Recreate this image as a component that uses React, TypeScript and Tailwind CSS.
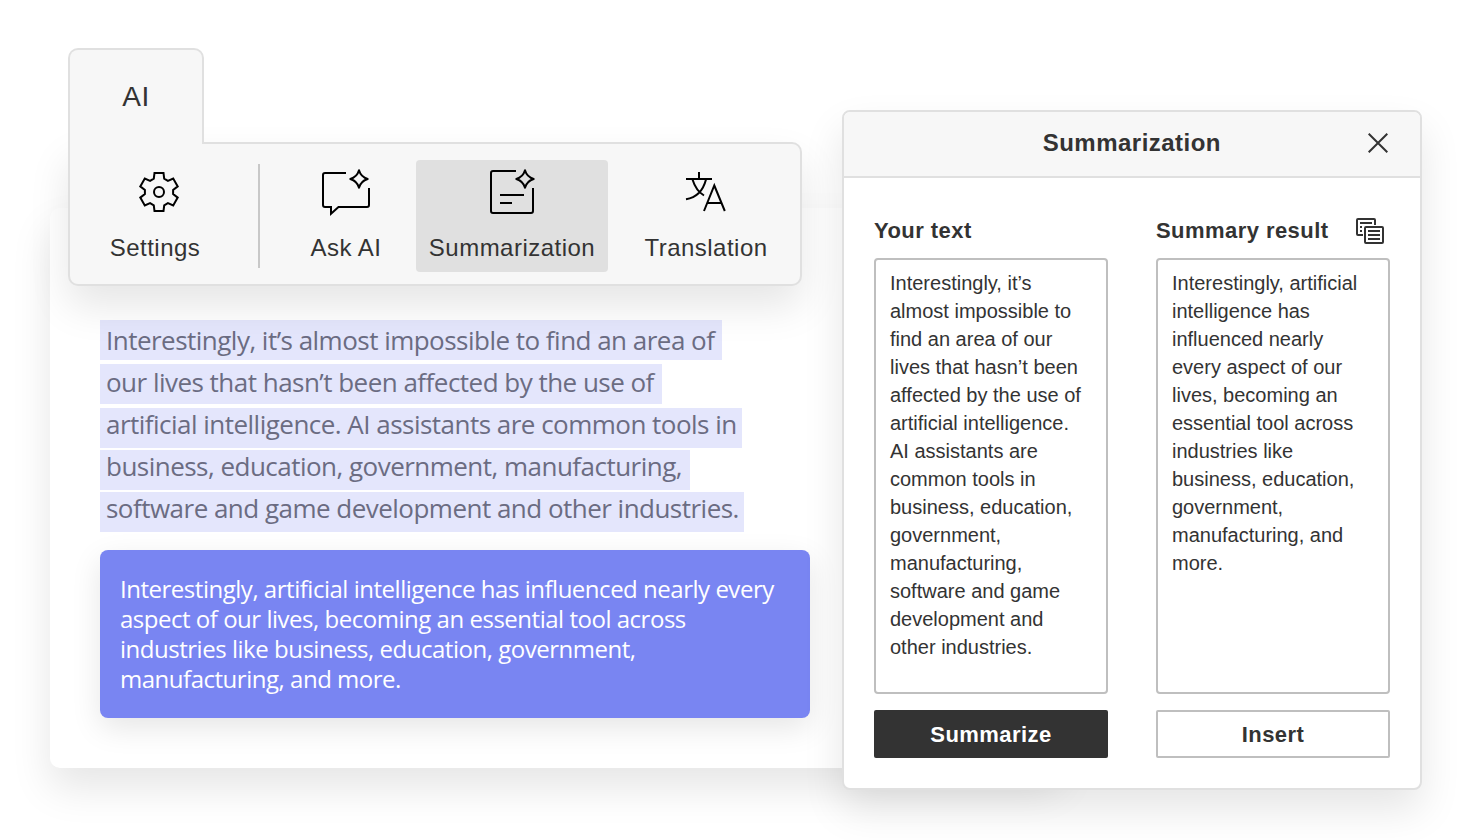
import type { ReactNode } from "react";

const selectedLines = [
  { text: "Interestingly, it’s almost impossible to find an area of", box: "w-[622px] leading-[40px]" },
  { text: "our lives that hasn’t been affected by the use of", box: "mt-1 w-[562px] leading-[36px]" },
  { text: "artificial intelligence. AI assistants are common tools in", box: "mt-1 w-[642px] leading-[32px]" },
  { text: "business, education, government, manufacturing,", box: "mt-0.5 w-[590px] leading-[32px]" },
  { text: "software and game development and other industries.", box: "mt-0.5 w-[644px] leading-[32px]" },
];

const summaryLines = [
  "Interestingly, artificial intelligence has influenced nearly every",
  "aspect of our lives, becoming an essential tool across",
  "industries like business, education, government,",
  "manufacturing, and more.",
];

const yourText = [
  "Interestingly, it’s",
  "almost impossible to",
  "find an area of our",
  "lives that hasn’t been",
  "affected by the use of",
  "artificial intelligence.",
  "AI assistants are",
  "common tools in",
  "business, education,",
  "government,",
  "manufacturing,",
  "software and game",
  "development and",
  "other industries.",
];

const resultText = [
  "Interestingly, artificial",
  "intelligence has",
  "influenced nearly",
  "every aspect of our",
  "lives, becoming an",
  "essential tool across",
  "industries like",
  "business, education,",
  "government,",
  "manufacturing, and",
  "more.",
];

const STAR = "M0 -8.7C1.2 -4.5 4.5 -1.2 8.7 0C4.5 1.2 1.2 4.5 0 8.7C-1.2 4.5 -4.5 1.2 -8.7 0C-4.5 -1.2 -1.2 -4.5 0 -8.7Z";

function Icon({ children }: { children: ReactNode }) {
  return (
    <svg width="56" height="56" viewBox="0 0 56 56" fill="none" stroke="#000" strokeWidth="2" className="shrink-0">
      {children}
    </svg>
  );
}

function SettingsIcon() {
  return (
    <Icon>
      <g transform="translate(28 28)">
        <path d="M-5.2 -13.3L-4.5 -19H4.5L5.2 -13.3L8.9 -11.2L14.2 -13.4L18.7 -5.6L14.1 -2.1V2.1L18.7 5.6L14.2 13.4L8.9 11.2L5.2 13.3L4.5 19H-4.5L-5.2 13.3L-8.9 11.2L-14.2 13.4L-18.7 5.6L-14.1 2.1V-2.1L-18.7 -5.6L-14.2 -13.4L-8.9 -11.2Z" />
        <circle r="5" />
      </g>
    </Icon>
  );
}

function AskIcon() {
  return (
    <Icon>
      <path d="M28 9H7A2 2 0 0 0 5 11V41A2 2 0 0 0 7 43H13V49.7L20.5 43H49A2 2 0 0 0 51 41V24" />
      <path transform="translate(41 15)" strokeLinejoin="round" d={STAR} />
    </Icon>
  );
}

function SummarizeIcon() {
  return (
    <Icon>
      <path d="M32 7H9A2 2 0 0 0 7 9V47A2 2 0 0 0 9 49H47A2 2 0 0 0 49 47V24M16 31H40M16 39H28" />
      <path transform="translate(41 15)" strokeLinejoin="round" d={STAR} />
    </Icon>
  );
}

function TranslateIcon() {
  return (
    <Icon>
      <path d="M21 8V15M8 15H34M14.5 15.5C16.5 22 20 28 26 31.5M28 15.5C25 27 19 33.5 8 35.2" />
      <path d="M26 47L36.3 21.5L46.8 47M29.5 39H43.5" />
    </Icon>
  );
}

function CloseIcon() {
  return (
    <svg width="20" height="20" viewBox="0 0 20 20" fill="none" stroke="#333" strokeWidth="2">
      <path d="M0.7 0.7L19.3 19.3M19.3 0.7L0.7 19.3" />
    </svg>
  );
}

function CopyIcon() {
  return (
    <svg width="28" height="26" viewBox="0 0 28 26" fill="none" stroke="#333" strokeWidth="2">
      <path d="M19 7V2A1 1 0 0 0 18 1H2A1 1 0 0 0 1 2V16A1 1 0 0 0 2 17H7M4 5H16M4 9H6M4 13H6" />
      <rect x="9" y="9" width="18" height="16" rx="1" />
      <path d="M12 13H24M12 17H24M12 21H24" />
    </svg>
  );
}

function Tool({
  label,
  icon,
  className,
  labelClassName = "",
}: {
  label: string;
  icon: ReactNode;
  className: string;
  labelClassName?: string;
}) {
  return (
    <button className={`flex h-28 flex-col items-center rounded pt-1 ${className}`}>
      {icon}
      <span className={`mt-3 text-2xl leading-8 tracking-[0.02em] whitespace-nowrap ${labelClassName}`}>{label}</span>
    </button>
  );
}

function Lines({ lines }: { lines: string[] }) {
  return (
    <>
      {lines.map((line) => (
        <span key={line} className="block whitespace-nowrap">
          {line}
        </span>
      ))}
    </>
  );
}

function DocumentPage() {
  return (
    <section className="mt-[208px] ml-[50px] h-[560px] w-[1010px] rounded-[10px] bg-white pt-28 pl-[50px] font-['Open_Sans',sans-serif] shadow-[0_20px_40px_rgba(0,0,0,0.1)] [grid-area:1/1]">
      <div className="text-[26px] tracking-[-0.02em] text-[#6b6c82]">
        {selectedLines.map((line) => (
          <p key={line.text} className={`h-10 bg-[#e4e6fc] pl-1.5 whitespace-nowrap ${line.box}`}>
            {line.text}
          </p>
        ))}
      </div>
      <p className="mt-[18px] h-[168px] w-[710px] rounded-lg bg-[#7985f2] pt-6 pl-5 text-2xl leading-[30px] tracking-[-0.02em] text-white shadow-[0_10px_30px_rgba(0,0,0,0.1)]">
        <Lines lines={summaryLines} />
      </p>
    </section>
  );
}

function Toolbar() {
  return (
    <section className="mt-12 ml-[68px] flex h-[238px] w-[734px] flex-col [grid-area:1/1]">
      <div className="z-10 flex h-24 w-[136px] shrink-0 items-center justify-center rounded-t-[10px] border-2 border-b-0 border-[#e0e0e0] bg-[#f7f7f7] text-[28px] tracking-[0.02em]">
        AI
      </div>
      <div className="-mt-0.5 flex h-36 rounded-[10px] rounded-tl-none border-2 border-[#e0e0e0] bg-[#f7f7f7] pt-4 shadow-[0_20px_40px_rgba(0,0,0,0.1)]">
        <Tool label="Settings" icon={<SettingsIcon />} className="ml-[35px] w-[108px]" labelClassName="mr-2" />
        <div className="mt-1 ml-[45px] h-[104px] w-0.5 bg-[#c8c8c8]" />
        <Tool label="Ask AI" icon={<AskIcon />} className="ml-[34px] w-[104px]" />
        <Tool label="Summarization" icon={<SummarizeIcon />} className="ml-[18px] w-48 bg-[#e0e0e0]" />
        <Tool label="Translation" icon={<TranslateIcon />} className="ml-[22px] w-[152px]" />
      </div>
    </section>
  );
}

function SummarizationDialog() {
  return (
    <section className="mt-[110px] ml-[842px] flex h-[680px] w-[580px] flex-col rounded-lg border-2 border-[#e0e0e0] bg-white shadow-[0_20px_40px_rgba(0,0,0,0.1)] [grid-area:1/1]">
      <header className="flex h-[66px] shrink-0 items-center justify-end rounded-t-md border-b-2 border-[#e0e0e0] bg-[#f7f7f7] pr-8 pb-0.5">
        <h2 className="mr-[147px] text-2xl font-bold tracking-[0.02em]">Summarization</h2>
        <CloseIcon />
      </header>
      <div className="grid grid-cols-[234px_234px] gap-x-12 pt-9 pl-[30px]">
        <div>
          <h3 className="h-11 text-[22px] leading-[34px] font-bold tracking-[0.02em]">Your text</h3>
          <div className="h-[436px] rounded border-2 border-[#bfbfbf] pt-[9px] pl-3.5 text-xl leading-7">
            <Lines lines={yourText} />
          </div>
          <button className="mt-4 h-12 w-full rounded-[2px] bg-[#333] text-[22px] font-bold tracking-[0.02em] text-white">
            Summarize
          </button>
        </div>
        <div>
          <div className="flex h-11 justify-between pr-1.5">
            <h3 className="text-[22px] leading-[34px] font-bold tracking-[0.02em]">Summary result</h3>
            <span className="pt-1">
              <CopyIcon />
            </span>
          </div>
          <div className="h-[436px] rounded border-2 border-[#bfbfbf] pt-[9px] pl-3.5 text-xl leading-7">
            <Lines lines={resultText} />
          </div>
          <button className="mt-4 h-12 w-full rounded-[2px] border-2 border-[#bfbfbf] bg-white text-[22px] font-bold tracking-[0.02em]">
            Insert
          </button>
        </div>
      </div>
    </section>
  );
}

export default function App() {
  return (
    <main className="grid h-[840px] w-[1472px] items-start justify-items-start overflow-hidden bg-white font-['Liberation_Sans',Arial,sans-serif] text-[#333]">
      <DocumentPage />
      <Toolbar />
      <SummarizationDialog />
    </main>
  );
}
